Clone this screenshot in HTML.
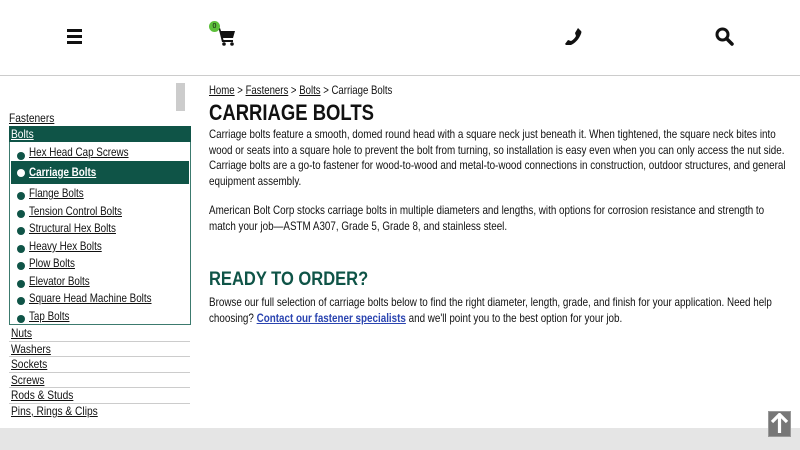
<!DOCTYPE html>
<html><head><meta charset="utf-8"><style>
*{margin:0;padding:0;box-sizing:border-box}
body{width:800px;height:450px;overflow:hidden;background:#fff;font-family:"Liberation Sans",sans-serif;color:#111;position:relative}
a{color:#111;text-decoration:underline}
.abs{position:absolute;white-space:nowrap;transform-origin:left top}
.hdr{position:absolute;left:0;top:0;width:800px;height:76px;border-bottom:1px solid #ccc}
.t{font-size:12px;line-height:15.5px;transform:scaleX(0.82)}
.item{position:absolute;left:29px;font-size:12px;white-space:nowrap;transform:scaleX(0.82);transform-origin:left top}
.dot{position:absolute;left:17px;width:8px;height:8px;border-radius:50%;background:#0f5447}
.row{position:absolute;left:9px;width:181px;height:15.5px;border-bottom:1px solid #ccc;font-size:12px;line-height:14px;padding-left:2px}
.row a{display:inline-block;transform:scaleX(0.85);transform-origin:left top}
</style></head><body>
<div class="hdr"></div>
<div class="abs" style="left:67px;top:29px;width:15px;height:3px;background:#111"></div>
<div class="abs" style="left:67px;top:35px;width:15px;height:3px;background:#111"></div>
<div class="abs" style="left:67px;top:41px;width:15px;height:3px;background:#111"></div>
<svg class="abs" style="left:216px;top:27px" width="20" height="19" viewBox="0 0 20 19"><path d="M0 1h4l1 3h14l-2 7H7l.5 2H17v2H6L3 3H0z" fill="#111"/><circle cx="8" cy="17" r="1.8" fill="#111"/><circle cx="16" cy="17" r="1.8" fill="#111"/></svg>
<div class="abs" style="left:209px;top:21px;width:11px;height:11px;border-radius:50%;background:#5cbf3a;font-size:7px;line-height:11px;text-align:center;color:#111">0</div>
<svg class="abs" style="left:565px;top:28px" width="17" height="17" viewBox="0 0 17 17"><path d="M13 0l3 3c1 1 0 3-1 5-2 4-5 7-9 9-2 1-4 1-5 0l-1-1 3-4 3 1c2-1 4-3 5-5l-1-3z" fill="#111"/></svg>
<svg class="abs" style="left:715px;top:27px" width="19" height="19" viewBox="0 0 19 19"><circle cx="7.5" cy="7.5" r="5.5" fill="none" stroke="#111" stroke-width="3"/><path d="M11.5 11.5l5.5 5.5" stroke="#111" stroke-width="3.5" stroke-linecap="round"/></svg>

<div class="abs" style="left:176px;top:83px;width:9px;height:28px;background:#ccc"></div>
<a class="abs" style="left:9px;top:111px;font-size:12px;transform:scaleX(0.85)">Fasteners</a>
<div class="abs" style="left:9px;top:126px;width:182px;height:199px;border:1.5px solid #3c7a6e"></div>
<div class="abs" style="left:9px;top:126px;width:182px;height:16px;background:#0f5447"></div>
<a class="abs" style="left:11px;top:127px;font-size:12px;color:#fff;transform:scaleX(0.85)">Bolts</a>
<div class="abs" style="left:11px;top:161px;width:178px;height:23px;background:#0f5447"></div>
<div class="dot" style="top:152px"></div><a class="item" style="top:145px">Hex Head Cap Screws</a>
<div class="dot" style="top:169px;background:#fff"></div><a class="item" style="top:165px;color:#fff;font-weight:bold">Carriage Bolts</a>
<div class="dot" style="top:192px"></div><a class="item" style="top:186px">Flange Bolts</a>
<div class="dot" style="top:210px"></div><a class="item" style="top:204px">Tension Control Bolts</a>
<div class="dot" style="top:227px"></div><a class="item" style="top:221px">Structural Hex Bolts</a>
<div class="dot" style="top:245px"></div><a class="item" style="top:239px">Heavy Hex Bolts</a>
<div class="dot" style="top:262px"></div><a class="item" style="top:256px">Plow Bolts</a>
<div class="dot" style="top:280px"></div><a class="item" style="top:274px">Elevator Bolts</a>
<div class="dot" style="top:297px"></div><a class="item" style="top:291px">Square Head Machine Bolts</a>
<div class="dot" style="top:315px"></div><a class="item" style="top:309px">Tap Bolts</a>
<div class="row" style="top:326px"><a>Nuts</a></div>
<div class="row" style="top:341.5px"><a>Washers</a></div>
<div class="row" style="top:357px"><a>Sockets</a></div>
<div class="row" style="top:372.5px"><a>Screws</a></div>
<div class="row" style="top:388px"><a>Rods &amp; Studs</a></div>
<div class="row" style="top:403.5px;border-bottom:none"><a>Pins, Rings &amp; Clips</a></div>

<div class="abs" style="left:209px;top:83px;font-size:12px;transform:scaleX(0.8)"><a>Home</a> &gt; <a>Fasteners</a> &gt; <a>Bolts</a> &gt; Carriage Bolts</div>
<div class="abs" style="left:209px;top:100px;font-size:22px;font-weight:bold;transform:scaleX(0.84)">CARRIAGE BOLTS</div>
<div class="abs t" style="left:209px;top:127px">Carriage bolts feature a smooth, domed round head with a square neck just beneath it. When tightened, the square neck bites into<br>wood or seats into a square hole to prevent the bolt from turning, so installation is easy even when you can only access the nut side.<br>Carriage bolts are a go-to fastener for wood-to-wood and metal-to-wood connections in construction, outdoor structures, and general<br>equipment assembly.</div>
<div class="abs t" style="left:209px;top:203px">American Bolt Corp stocks carriage bolts in multiple diameters and lengths, with options for corrosion resistance and strength to<br>match your job—ASTM A307, Grade 5, Grade 8, and stainless steel.</div>
<div class="abs" style="left:209px;top:269px;font-size:19px;font-weight:bold;color:#0f5447;transform:scaleX(0.87)">READY TO ORDER?</div>
<div class="abs t" style="left:209px;top:295px">Browse our full selection of carriage bolts below to find the right diameter, length, grade, and finish for your application. Need help<br>choosing? <a style="color:#2a44b0;font-weight:bold">Contact our fastener specialists</a> and we'll point you to the best option for your job.</div>

<div class="abs" style="left:0;top:428px;width:800px;height:22px;background:#e5e5e5"></div>
<div class="abs" style="left:768px;top:411px;width:23px;height:26px;background:#777;border:1px solid #999"></div>
<svg class="abs" style="left:770px;top:413px" width="19" height="22" viewBox="0 0 19 22"><path d="M9.5 2v18M2 9l7.5-7.5L17 9" stroke="#fff" stroke-width="3.2" fill="none"/></svg>
</body></html>
